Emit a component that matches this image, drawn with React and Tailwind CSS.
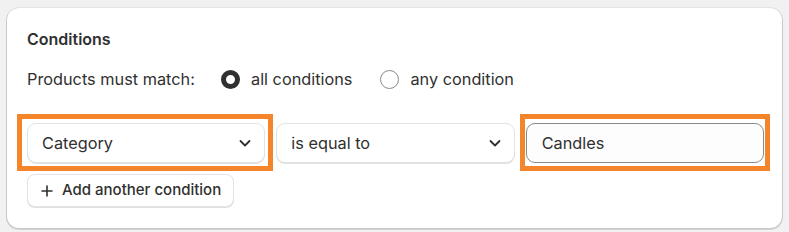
import React, { useState } from 'react';

// chevron used on the two selects
function Chevron() {
  return (
    <svg width="14" height="14" viewBox="0 0 14 14" fill="none" className="shrink-0">
      <path d="M2.5 5 7 9.5 11.5 5" stroke="#303030" strokeWidth="1.8" strokeLinecap="round" strokeLinejoin="round" />
    </svg>
  );
}

// orange annotation frame drawn over a field
function Highlight({ children, wide }) {
  return (
    <div className="relative">
      {children}
      <span className={`pointer-events-none absolute -top-[9px] -bottom-[8px] border-[5px] border-[#f5852b] ${wide ? '-left-[10px] -right-[8px]' : '-left-[6px] -right-[6px]'}`} />
    </div>
  );
}

function Radio({ checked, label, onClick }) {
  return (
    <button type="button" onClick={onClick} className="flex items-center gap-[11px]">
      {checked ? (
        <span className="w-[19px] h-[19px] rounded-full border-[5px] border-[#303030] bg-white" />
      ) : (
        <span className="w-[19px] h-[19px] rounded-full border border-[#8a8a8a] bg-white" />
      )}
      <span className="text-[16.3px] leading-5 text-[#303030]">{label}</span>
    </button>
  );
}

function Select({ value }) {
  return (
    <div className="h-[40px] rounded-[9px] bg-white border border-[#e3e3e3] shadow-[0_1px_0_0_rgba(0,0,0,0.12)] flex items-center justify-between pl-[14px] pr-[12px]">
      <span className="text-[16.3px] text-[#303030]">{value}</span>
      <Chevron />
    </div>
  );
}

export default function App() {
  const [match, setMatch] = useState('all');

  return (
    <div className="min-h-screen bg-[#f1f1f1] pt-[8px] px-[7px] pb-[4px]" style={{ fontFamily: 'Inter, "Noto Sans", sans-serif' }}>
      <div className="bg-white rounded-[12px] shadow-[0_0_0_1px_rgba(0,0,0,0.05),0_1px_0_1px_rgba(0,0,0,0.12)] pt-[21px] pb-[21px] pl-[20px] pr-[18px]">
        <h2 className="text-[16px] leading-5 font-semibold text-[#303030]">Conditions</h2>

        <div className="mt-[20px] flex items-center">
          <span className="text-[16.3px] leading-5 text-[#303030] w-[194px]">Products must match:</span>
          <Radio checked={match === 'all'} label="all conditions" onClick={() => setMatch('all')} />
          <div className="w-[28px]" />
          <Radio checked={match === 'any'} label="any condition" onClick={() => setMatch('any')} />
        </div>

        <div className="mt-[34px] grid grid-cols-3 gap-[11px]">
          <Highlight wide>
            <Select value="Category" />
          </Highlight>
          <Select value="is equal to" />
          <Highlight>
            <div className="h-[40px] rounded-[9px] bg-[#fdfdfd] border border-[#8a8a8a] flex items-center pl-[15px]">
              <span className="text-[16.3px] text-[#303030]">Candles</span>
            </div>
          </Highlight>
        </div>

        <button type="button" className="mt-[11px] h-[33px] px-[12px] rounded-[8px] bg-white border border-[#e3e3e3] shadow-[0_1px_0_0_rgba(0,0,0,0.12)] flex items-center gap-[8px]">
          <svg width="14" height="14" viewBox="0 0 14 14" fill="none">
            <path d="M7 2v10M2 7h10" stroke="#303030" strokeWidth="1.6" strokeLinecap="round" />
          </svg>
          <span className="text-[15px] font-medium text-[#303030]">Add another condition</span>
        </button>
      </div>
    </div>
  );
}
